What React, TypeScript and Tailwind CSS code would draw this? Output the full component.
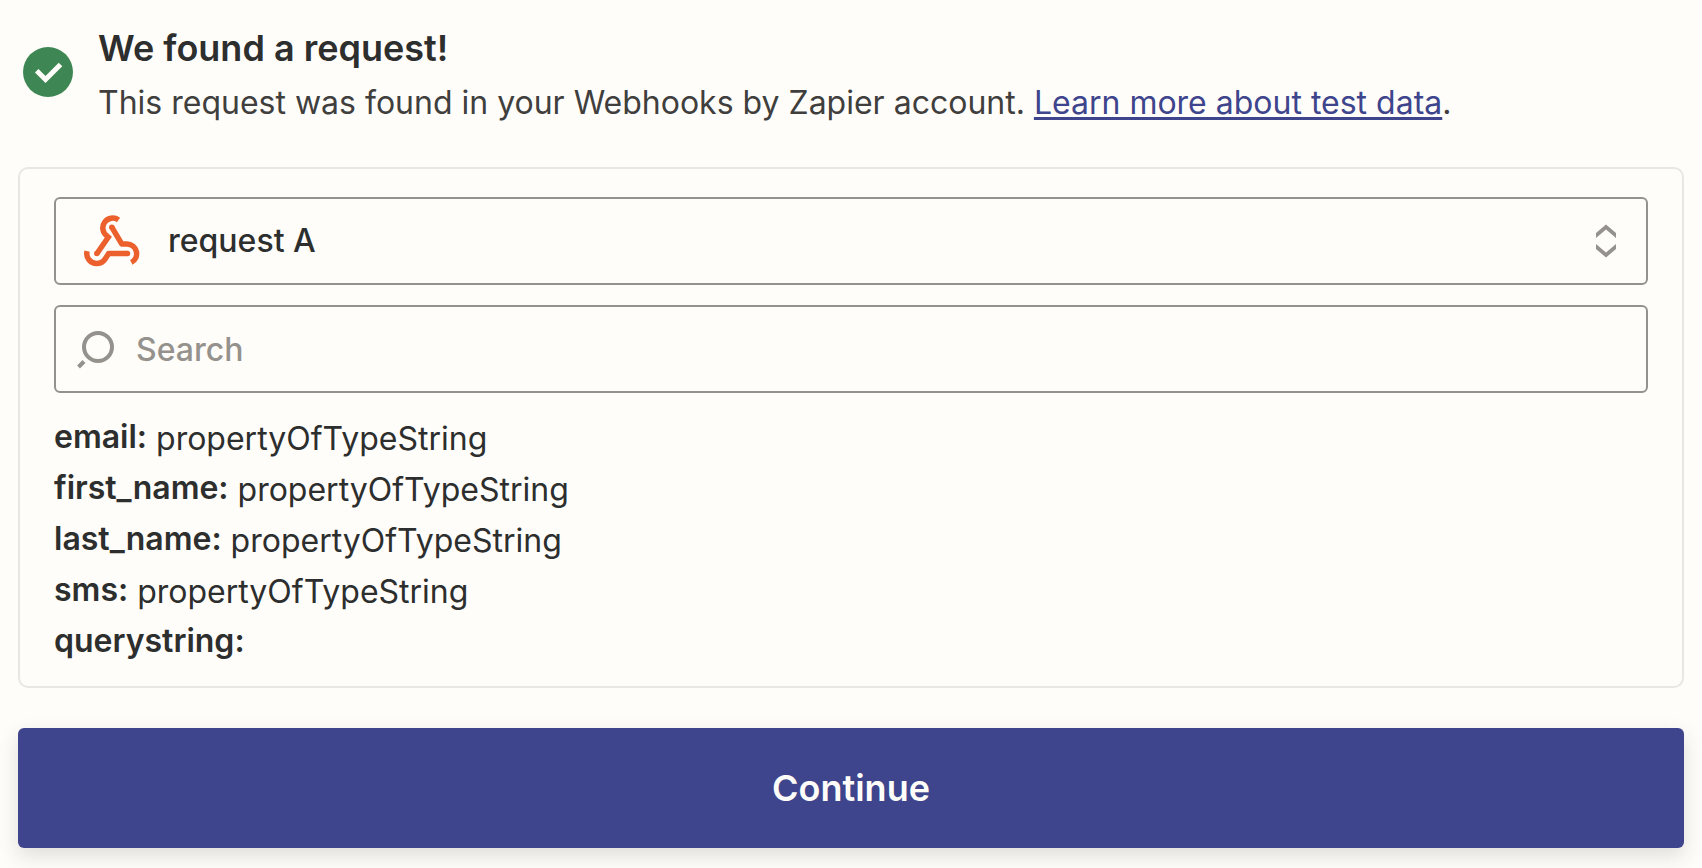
import { useState } from "react";

type Field = { name: string; value?: string };

const fields: Field[] = [
  { name: "email", value: "propertyOfTypeString" },
  { name: "first_name", value: "propertyOfTypeString" },
  { name: "last_name", value: "propertyOfTypeString" },
  { name: "sms", value: "propertyOfTypeString" },
  { name: "querystring" },
];

function CheckBadge() {
  return (
    <svg className="mt-[23px] size-[50px] shrink-0" viewBox="0 0 50 50" aria-hidden="true">
      <circle cx="25" cy="25" r="25" fill="#3e8754" />
      <path d="M13.7 23.7 L22.5 32.5 L37.5 17.5" fill="none" stroke="#fffdf9" strokeWidth="5" />
    </svg>
  );
}

function WebhookIcon() {
  return (
    <svg
      className="h-[52px] w-14 shrink-0"
      viewBox="0 0 56 52"
      fill="none"
      stroke="#eb602d"
      strokeWidth="5.5"
      strokeLinejoin="round"
      aria-hidden="true"
    >
      <path d="M34.5 5 A9.8 9.8 0 1 0 22.8 20.8 L24.3 22.2 L12.8 38.7" strokeLinejoin="miter" />
      <circle cx="12.8" cy="38.6" r="2.75" fill="#eb602d" stroke="none" />
      <path d="M27.8 12.2 L37.7 28.9 H43 A9.8 9.8 0 0 1 47.3 47.4" />
      <circle cx="27.8" cy="12.2" r="2.75" fill="#eb602d" stroke="none" />
      <path d="M3.1 36.2 A9.8 9.8 0 0 0 12.8 48.4 C19.5 48.4 21.5 43.5 24.5 38.6 H43.5" />
      <circle cx="43.5" cy="38.6" r="2.75" fill="#eb602d" stroke="none" />
    </svg>
  );
}

function SearchIcon() {
  return (
    <svg className="size-10 shrink-0" viewBox="0 0 40 40" fill="none" stroke="#95928e" strokeWidth="4" aria-hidden="true">
      <circle cx="22" cy="18" r="14" />
      <path d="M8 32.5 L2.5 38" />
    </svg>
  );
}

function SortIcon() {
  return (
    <svg className="h-[34px] w-5 shrink-0" viewBox="0 0 20 34" fill="#95928e" aria-hidden="true">
      <path d="M10 0.5 L20 9 V14 L10 5.6 L0 14 V9 Z" />
      <path d="M10 33.5 L20 25 V20 L10 28.4 L0 20 V25 Z" />
    </svg>
  );
}

export default function App() {
  const [query, setQuery] = useState("");
  const visible = fields.filter((f) => f.name.includes(query.toLowerCase()));

  return (
    <main className="min-h-screen bg-[#fffdf9] px-[18px] pt-6 pb-5 font-['Inter',sans-serif] text-[32px] text-[#2d2e2e]">
      <header className="flex items-start gap-[25px] pl-[5px]">
        <CheckBadge />
        <div>
          <h1 className="text-[36px] leading-[48px] font-semibold">We found a request!</h1>
          <p className="mt-[7px] leading-[48px] text-[#403f3e]">
            This request was found in your Webhooks by Zapier account.{" "}
            <a href="#test-data" className="text-[#3e458c] underline decoration-[3px] underline-offset-[3px]">
              Learn more about test data
            </a>
            .
          </p>
        </div>
      </header>

      <section className="mt-10 rounded-[10px] border-2 border-[#e8e7e4] px-[34px] pt-7 pb-[18px]">
        <div className="grid h-[88px] items-center">
          <select
            aria-label="Request"
            className="col-start-1 row-start-1 h-full w-full appearance-none rounded-md border-2 border-[#95928e] bg-transparent pr-16 pl-[112px] font-medium"
          >
            <option>request A</option>
          </select>
          <div className="pointer-events-none col-start-1 row-start-1 flex items-center justify-between pr-8 pl-[30px]">
            <WebhookIcon />
            <SortIcon />
          </div>
        </div>

        <label className="mt-5 flex h-[88px] items-center gap-5 rounded-md border-2 border-[#95928e] px-5">
          <SearchIcon />
          <input
            type="text"
            aria-label="Search"
            placeholder="Search"
            value={query}
            onChange={(e) => setQuery(e.target.value)}
            className="min-w-0 flex-1 bg-transparent pt-0.5 font-medium outline-none placeholder:text-[#95928e]"
          />
        </label>

        <dl className="mt-5">
          {visible.map((f) => (
            <div key={f.name} className="flex h-[51px] gap-[9px] leading-[48px]">
              <dt className="font-semibold">{f.name}:</dt>
              <dd className="pt-0.5">{f.value}</dd>
            </div>
          ))}
        </dl>
      </section>

      <button
        type="button"
        className="mt-10 h-[120px] w-full rounded-md bg-[#3e458c] text-[36px] font-semibold text-[#fffdf9] shadow-[0_8px_20px_rgba(45,46,46,0.15)]"
      >
        Continue
      </button>
    </main>
  );
}
